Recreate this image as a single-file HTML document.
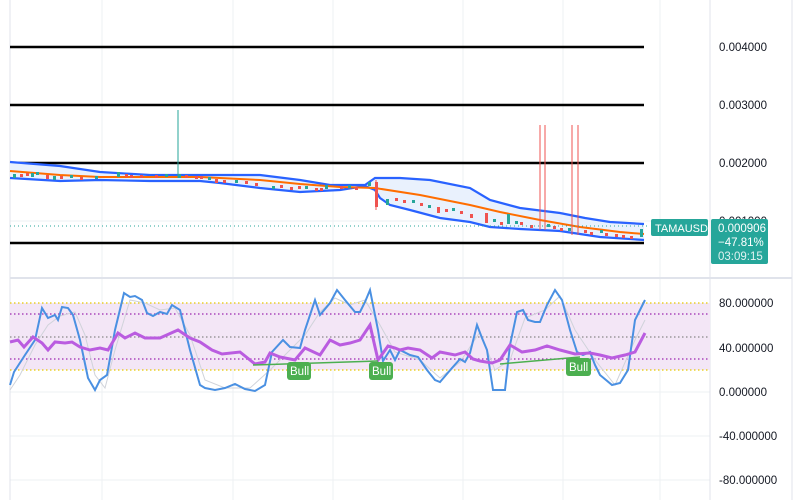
<!DOCTYPE html>
<html><head><meta charset="utf-8"><style>
body{margin:0;background:#fff;width:802px;height:500px;overflow:hidden;font-family:"Liberation Sans",sans-serif}
svg{position:absolute;left:0;top:0}
</style></head><body>
<svg width="802" height="500" xmlns="http://www.w3.org/2000/svg" font-family="Liberation Sans, sans-serif">
<g stroke="#eef0f3" stroke-width="1">
<line x1="102" y1="0" x2="102" y2="500"/><line x1="233" y1="0" x2="233" y2="500"/><line x1="333" y1="0" x2="333" y2="500"/><line x1="463" y1="0" x2="463" y2="500"/><line x1="563" y1="0" x2="563" y2="500"/><line x1="660" y1="0" x2="660" y2="500"/>
<line x1="10" y1="221" x2="710" y2="221"/><line x1="10" y1="348" x2="710" y2="348"/><line x1="10" y1="392" x2="710" y2="392"/><line x1="10" y1="436" x2="710" y2="436"/><line x1="10" y1="480" x2="710" y2="480"/>
</g>
<line x1="10" y1="0" x2="10" y2="500" stroke="#e0e3eb"/>
<line x1="710" y1="0" x2="710" y2="500" stroke="#e0e3eb"/>
<line x1="792" y1="0" x2="792" y2="500" stroke="#e0e3eb"/>
<line x1="10" y1="278" x2="792" y2="278" stroke="#e0e3eb" stroke-width="2"/>
<g stroke="#000" stroke-width="2.5">
<line x1="10" y1="47" x2="644" y2="47"/><line x1="10" y1="105" x2="644" y2="105"/><line x1="10" y1="163" x2="644" y2="163"/><line x1="10" y1="243" x2="644" y2="243"/>
</g>
<polygon fill="#e9f1fd" points="10,162 60,166 100,172 150,175 200,175 260,175 300,180 330,185 365,185 375,178 400,178 430,180 470,188 490,200 520,208 560,213 585,218 610,222 644,224 644,240 600,237 560,231 520,229 490,227 470,222 440,218 410,210 390,205 380,198 375,190 365,186 340,190 300,192 260,188 220,183 200,181 150,181 100,180 60,181 10,178"/>
<g fill="none" stroke="#2962ff" stroke-width="2.2">
<polyline points="10,162 60,166 100,172 150,175 200,175 260,175 300,180 330,185 365,185 375,178 400,178 430,180 470,188 490,200 520,208 560,213 585,218 610,222 644,224"/>
<polyline points="10,178 60,181 100,180 150,181 200,181 220,183 260,188 300,192 340,190 365,186 375,190 380,198 390,205 410,210 440,218 470,222 490,227 520,229 560,231 600,237 644,240"/>
</g>
<polyline fill="none" stroke="#ff6d00" stroke-width="2" points="10,171 60,175 100,177 200,177 260,180 300,184 340,187 375,188 420,195 470,205 500,212 540,220 580,227 620,232 644,234"/>
<line x1="178" y1="110" x2="178" y2="178" stroke="#26a69a"/>
<g stroke="#ef5350"><line x1="540" y1="125" x2="540" y2="230"/><line x1="545" y1="125" x2="545" y2="230"/><line x1="572" y1="125" x2="572" y2="235"/><line x1="578" y1="125" x2="578" y2="235"/><line x1="376" y1="180" x2="376" y2="210"/></g>
<g fill="#ef5350">
<rect x="20" y="174" width="3" height="3"/><rect x="26" y="173" width="3" height="3"/><rect x="46" y="175" width="3" height="4"/><rect x="60" y="176" width="3" height="3"/><rect x="80" y="177" width="3" height="3"/><rect x="125" y="174" width="3" height="3"/><rect x="130" y="175" width="3" height="3"/><rect x="140" y="175" width="3" height="3"/><rect x="155" y="175" width="3" height="3"/><rect x="185" y="175" width="3" height="3"/><rect x="195" y="176" width="3" height="3"/><rect x="200" y="176" width="3" height="3"/><rect x="215" y="179" width="3" height="4"/><rect x="223" y="180" width="3" height="3"/><rect x="245" y="181" width="3" height="3"/><rect x="255" y="183" width="3" height="3"/><rect x="280" y="185" width="3" height="3"/><rect x="290" y="187" width="3" height="3"/><rect x="298" y="186" width="3" height="3"/><rect x="315" y="188" width="3" height="3"/><rect x="320" y="188" width="3" height="3"/><rect x="340" y="186" width="3" height="3"/><rect x="355" y="187" width="3" height="3"/><rect x="375" y="182" width="3" height="25"/><rect x="395" y="198" width="3" height="3"/><rect x="403" y="200" width="3" height="3"/><rect x="420" y="203" width="3" height="3"/><rect x="437" y="207" width="3" height="6"/><rect x="445" y="209" width="3" height="3"/><rect x="460" y="211" width="3" height="3"/><rect x="470" y="214" width="3" height="4"/><rect x="485" y="213" width="3" height="10"/><rect x="500" y="222" width="3" height="3"/><rect x="520" y="222" width="3" height="3"/><rect x="530" y="225" width="3" height="3"/><rect x="553" y="226" width="3" height="3"/><rect x="560" y="228" width="3" height="3"/><rect x="584" y="230" width="3" height="3"/><rect x="590" y="232" width="3" height="3"/><rect x="605" y="233" width="3" height="3"/><rect x="615" y="234" width="3" height="3"/><rect x="622" y="235" width="3" height="3"/><rect x="630" y="236" width="3" height="3"/>
</g>
<g fill="#26a69a">
<rect x="13" y="174" width="3" height="4"/><rect x="31" y="173" width="3" height="4"/><rect x="36" y="172" width="3" height="3"/><rect x="53" y="176" width="3" height="4"/><rect x="70" y="175" width="3" height="3"/><rect x="95" y="176" width="3" height="3"/><rect x="117" y="172" width="3" height="5"/><rect x="165" y="174" width="3" height="3"/><rect x="178" y="174" width="3" height="4"/><rect x="208" y="177" width="3" height="3"/><rect x="235" y="180" width="3" height="3"/><rect x="272" y="186" width="3" height="3"/><rect x="305" y="186" width="3" height="3"/><rect x="325" y="185" width="3" height="4"/><rect x="348" y="185" width="3" height="3"/><rect x="368" y="182" width="3" height="4"/><rect x="386" y="199" width="3" height="6"/><rect x="412" y="200" width="3" height="3"/><rect x="428" y="205" width="3" height="3"/><rect x="452" y="208" width="3" height="3"/><rect x="493" y="219" width="3" height="3"/><rect x="507" y="214" width="3" height="10"/><rect x="515" y="221" width="3" height="3"/><rect x="547" y="224" width="3" height="3"/><rect x="568" y="228" width="3" height="3"/><rect x="600" y="230" width="3" height="3"/><rect x="640" y="229" width="3" height="8"/>
</g>
<line x1="10" y1="226" x2="650" y2="226" stroke="#26a69a" stroke-dasharray="1,3"/>
<text x="719" y="225" font-size="11.5" fill="#131722">0.001000</text>
<rect x="651" y="219" width="57" height="17" rx="2" fill="#26a69a"/>
<text x="655" y="232" font-size="11" fill="#fff">TAMAUSD</text>
<rect x="711" y="219" width="57" height="45" rx="2" fill="#26a69a"/>
<text x="718" y="232" font-size="11.5" fill="#fff">0.000906</text>
<text x="718" y="246" font-size="11.5" fill="#fff">−47.81%</text>
<text x="718" y="260" font-size="11.5" fill="#e0f2f1">03:09:15</text>
<g font-size="11.5" fill="#131722">
<text x="719" y="51">0.004000</text><text x="719" y="109">0.003000</text><text x="719" y="167">0.002000</text>
<text x="719" y="307">80.000000</text><text x="719" y="352">40.000000</text><text x="719" y="396">0.000000</text><text x="719" y="440">-40.000000</text><text x="719" y="484">-80.000000</text>
</g>
<rect x="10" y="303" width="700" height="67" fill="#f3e6f6"/>
<g stroke-dasharray="1.5,2.5" stroke-width="1.2">
<line x1="10" y1="303" x2="710" y2="303" stroke="#e6c800"/><line x1="10" y1="370" x2="710" y2="370" stroke="#e6c800"/>
<line x1="10" y1="314" x2="710" y2="314" stroke="#9c27b0"/><line x1="10" y1="359" x2="710" y2="359" stroke="#9c27b0"/>
<line x1="10" y1="337" x2="710" y2="337" stroke="#888"/>
</g>
<polyline fill="none" stroke="#d0d3da" stroke-width="1" points="10,390 20,375 35,345 48,325 60,316 75,312 85,335 95,375 105,388 115,350 130,300 145,303 160,310 175,308 190,335 205,380 225,388 250,388 270,370 290,350 305,335 320,312 335,298 350,305 365,300 380,325 395,352 420,360 440,378 460,362 480,332 495,370 510,360 525,318 545,310 560,296 575,330 595,360 615,385 635,340 645,320"/>
<polyline fill="none" stroke="#4a90e2" stroke-width="2" points="10,385 14,372 25,355 35,340 42,308 48,318 55,315 58,320 62,307 68,308 73,315 80,340 88,378 95,390 100,380 107,375 115,330 124,293 130,297 135,296 142,300 147,313 153,316 160,312 167,314 172,305 180,310 190,350 200,385 205,388 215,390 225,388 235,384 245,389 255,391 265,385 272,352 283,340 290,347 300,348 305,330 315,300 320,315 330,303 337,290 345,300 355,312 360,312 365,302 370,290 378,330 383,361 390,350 395,360 400,350 410,355 418,357 427,370 435,380 440,382 452,368 460,359 465,362 470,353 477,325 482,338 487,350 493,390 505,390 510,345 517,312 523,310 528,320 535,322 540,322 547,305 555,290 562,300 570,330 577,352 583,355 590,352 595,365 600,375 612,385 620,383 628,370 635,320 645,300"/>
<polyline fill="none" stroke="#ba5ce0" stroke-width="3" points="10,342 18,340 24,347 33,337 42,343 48,350 55,342 65,343 72,342 80,347 90,350 100,348 108,350 118,333 125,338 135,333 145,338 160,338 178,330 190,338 200,342 212,350 222,354 240,352 255,364 265,362 270,353 280,357 295,360 305,348 320,355 330,340 340,345 350,343 360,340 370,325 378,360 388,346 395,348 400,350 408,348 420,350 432,358 440,352 455,355 465,352 473,359 480,361 492,363 500,360 510,345 522,352 535,350 547,346 560,350 575,354 590,353 600,355 612,358 625,355 635,352 645,333"/>
<g stroke="#4caf50" stroke-width="1.5"><line x1="253" y1="365" x2="378" y2="361"/><line x1="500" y1="364" x2="580" y2="357"/></g>
<g fill="#4caf50"><rect x="287" y="362" width="24" height="18" rx="3"/><rect x="369" y="362" width="24" height="18" rx="3"/><rect x="566" y="358" width="25" height="18" rx="3"/></g>
<g fill="#fff" font-size="11.5"><text x="290" y="375">Bull</text><text x="372" y="375">Bull</text><text x="569" y="371">Bull</text></g>
</svg>
</body></html>
